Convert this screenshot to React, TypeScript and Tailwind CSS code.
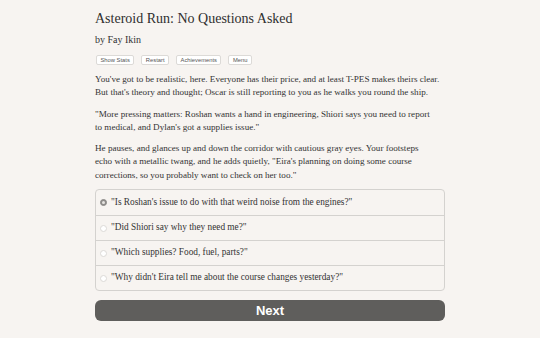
import React from "react";

const choices = [
  "\"Is Roshan's issue to do with that weird noise from the engines?\"",
  "\"Did Shiori say why they need me?\"",
  "\"Which supplies? Food, fuel, parts?\"",
  "\"Why didn't Eira tell me about the course changes yesterday?\"",
];

export default function App() {
  return (
    <div className="w-[540px] h-[338px] bg-[#f7f4f1] text-[#333333] overflow-hidden" style={{ fontFamily: '"Liberation Serif", serif' }}>
      <div className="w-[350px] ml-[95px] pt-[9px]">
        <h1 className="text-[14px] leading-[20px] text-[#2f2f2f]">Asteroid Run: No Questions Asked</h1>
        <div className="text-[10px] leading-[14px] mt-[4px]">by Fay Ikin</div>
        <div className="flex gap-[7px] mt-[8px] ml-px font-['Liberation_Sans',sans-serif]">
          {["Show Stats", "Restart", "Achievements", "Menu"].map((b) => (
            <div key={b} className="h-[10px] px-[3.5px] text-[5.8px] leading-[8px] text-[#555] bg-white border border-[#dcdad7] rounded-[2px]">
              {b}
            </div>
          ))}
        </div>
        <div className="mt-[8px] w-[350px] text-[9.1px] leading-[13.3px] flex flex-col gap-[8px]">
          <p>
            You've got to be realistic, here. Everyone has their price, and at least T-PES makes theirs clear.
            <br />
            But that's theory and thought; Oscar is still reporting to you as he walks you round the ship.
          </p>
          <p>
            "More pressing matters: Roshan wants a hand in engineering, Shiori says you need to report
            <br />
            to medical, and Dylan's got a supplies issue."
          </p>
          <p>
            He pauses, and glances up and down the corridor with cautious gray eyes. Your footsteps
            <br />
            echo with a metallic twang, and he adds quietly, "Eira's planning on doing some course
            <br />
            corrections, so you probably want to check on her too."
          </p>
        </div>
        <div className="mt-[7px] border border-[#d4d2cf] rounded-[4px] flex flex-col">
          {choices.map((c, i) => (
            <div key={i} className={`h-[25px] flex items-center gap-[4px] pl-[4px] text-[9.3px] ${i > 0 ? "border-t border-[#d4d2cf]" : ""}`}>
              <span className={`w-[7px] h-[7px] rounded-full border flex items-center justify-center ${i === 0 ? "bg-[#8e8c8a] border-[#8e8c8a]" : "bg-white border-[#dcdad7]"}`}>
                {i === 0 && <span className="w-[3px] h-[3px] rounded-full bg-[#e6e4e1]" />}
              </span>
              <span>{c}</span>
            </div>
          ))}
        </div>
        <div className="mt-[9px] h-[21px] rounded-[6px] bg-[#5f5e5c] text-white text-[13px] font-bold flex items-center justify-center font-['Liberation_Sans',sans-serif]">
          Next
        </div>
      </div>
    </div>
  );
}
